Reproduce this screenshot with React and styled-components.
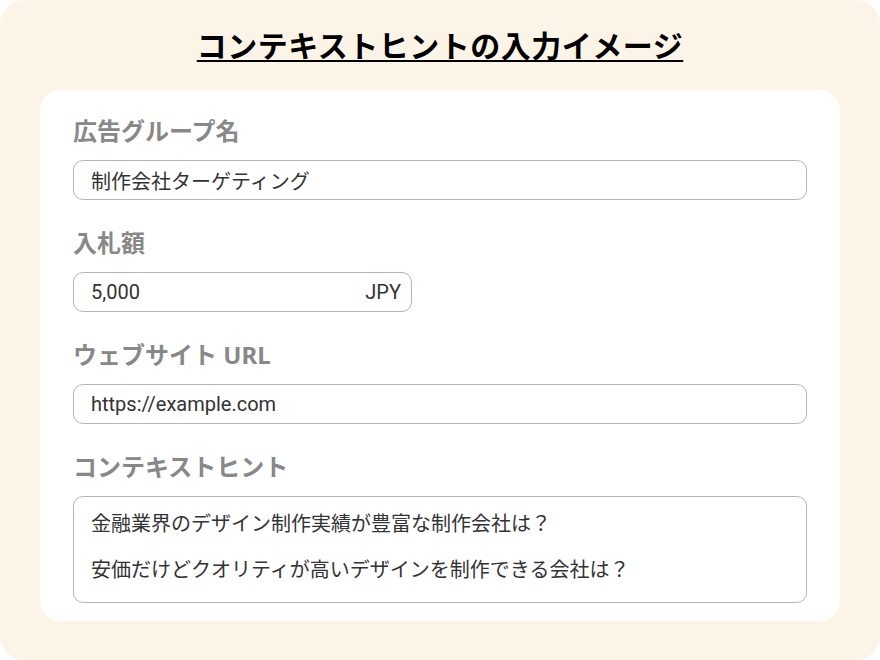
import React from "react";
import styled, { createGlobalStyle } from "styled-components";

const GlobalStyle = createGlobalStyle`
  html, body {
    margin: 0;
    padding: 0;
    background: #ffffff;
  }
  body {
    font-family: Roboto, "Noto Sans CJK JP", sans-serif;
  }
`;

const Frame = styled.div`
  width: 880px;
  height: 660px;
  box-sizing: border-box;
  background: #fdf4e8;
  border-radius: 24px;
  padding: 24px 40px 40px;
  display: flex;
  flex-direction: column;
  align-items: center;
`;

const Title = styled.h1`
  margin: 0;
  font-family: "Noto Sans CJK JP", sans-serif;
  font-size: 30px;
  font-weight: 700;
  line-height: 40px;
  letter-spacing: 0.5px;
  color: #000;
  text-decoration: underline;
  text-underline-offset: 3px;
  text-decoration-thickness: 2px;
`;

const Card = styled.div`
  margin-top: 26px;
  align-self: stretch;
  flex: 1;
  background: #fff;
  border-radius: 20px;
  padding: 25px 33px 18px;
  display: flex;
  flex-direction: column;
  gap: 27px;
`;

const Field = styled.div`
  display: flex;
  flex-direction: column;
  gap: 13px;
`;

const Label = styled.label`
  font-family: "Noto Sans", "Noto Sans CJK JP", sans-serif;
  font-size: 24px;
  font-weight: 700;
  line-height: 32px;
  color: #888;
`;

const Box = styled.div`
  box-sizing: border-box;
  width: ${p => (p.$narrow ? "339px" : "100%")};
  height: 40px;
  border: 1px solid #b5b5b5;
  border-radius: 10px;
  padding: 0 10px 0 17px;
  display: flex;
  align-items: center;
  justify-content: space-between;
  font-size: 20px;
  color: #333;
`;

const Unit = styled.span`
  color: #333;
`;

const Area = styled.div`
  box-sizing: border-box;
  width: 100%;
  border: 1px solid #b5b5b5;
  border-radius: 10px;
  padding: 4px 17px 9px;
  font-size: 20px;
  line-height: 46px;
  color: #333;
`;

const fields = [
  { label: "広告グループ名", value: "制作会社ターゲティング" },
  { label: "入札額", value: "5,000", unit: "JPY" },
  { label: "ウェブサイト URL", value: "https://example.com" },
];

const hints = [
  "金融業界のデザイン制作実績が豊富な制作会社は？",
  "安価だけどクオリティが高いデザインを制作できる会社は？",
];

export default function App() {
  return (
    <>
      <GlobalStyle />
      <Frame>
        <Title>コンテキストヒントの入力イメージ</Title>
        <Card>
          {fields.map(f => (
            <Field key={f.label}>
              <Label>{f.label}</Label>
              <Box $narrow={!!f.unit}>
                <span>{f.value}</span>
                {f.unit && <Unit>{f.unit}</Unit>}
              </Box>
            </Field>
          ))}
          <Field>
            <Label>コンテキストヒント</Label>
            <Area>
              {hints.map(h => (
                <div key={h}>{h}</div>
              ))}
            </Area>
          </Field>
        </Card>
      </Frame>
    </>
  );
}
